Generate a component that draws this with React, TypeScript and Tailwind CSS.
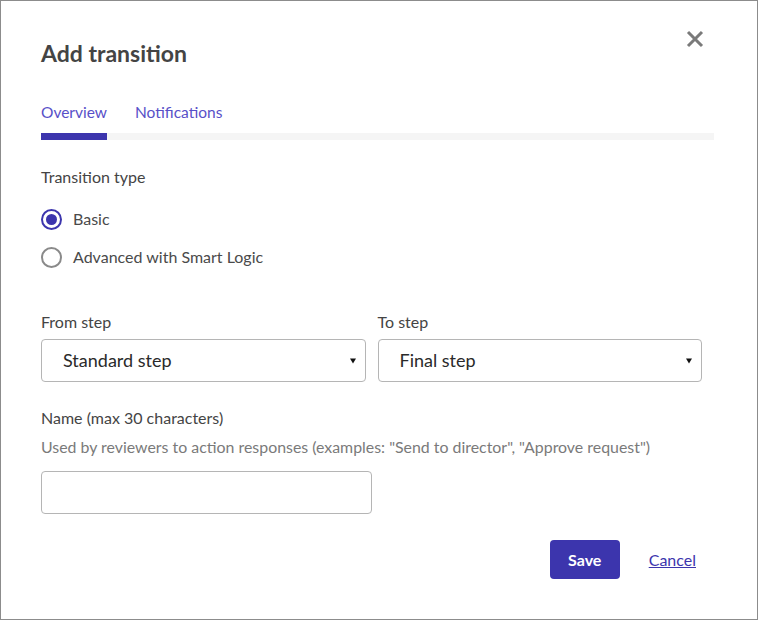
import React from 'react';

const font = { fontFamily: 'Lato, "Open Sans", sans-serif' };

function Radio({ checked, label }: { checked?: boolean; label: string }) {
  return (
    <label className="flex items-center gap-[11px] h-[20px]">
      {checked ? (
        <span className="w-[21px] h-[21px] rounded-full border-2 border-[#3c35ad] flex items-center justify-center">
          <span className="w-[11px] h-[11px] rounded-full bg-[#3c35ad]" />
        </span>
      ) : (
        <span className="w-[21px] h-[21px] rounded-full border-2 border-[#8a8a8a]" />
      )}
      <span className="text-[16px] text-[#4a4a4a]">{label}</span>
    </label>
  );
}

function Select({ value }: { value: string }) {
  return (
    <div className="h-[43px] border border-[#b5b5b5] rounded-[4px] flex items-center justify-between pl-[21px] pr-[9px]">
      <span className="text-[18px] text-[#2a2a2a]">{value}</span>
      <svg width="6" height="6" viewBox="0 0 6 6">
        <path d="M0 0.5 H6 L3 5.5 Z" fill="#111" />
      </svg>
    </div>
  );
}

export default function App() {
  return (
    <div className="w-[758px] h-[620px] bg-white border border-[#8c8c8c] relative" style={font}>
      <button className="absolute left-[684px] top-[28px] w-[20px] h-[20px] flex items-center justify-center">
        <svg width="18" height="18" viewBox="0 0 18 18">
          <path d="M2 2 L16 16 M16 2 L2 16" stroke="#7a7a7a" strokeWidth="3" />
        </svg>
      </button>
      <div className="pl-[40px] pr-[43px] pt-[38px]">
        <h1 className="text-[23px] font-bold text-[#444] leading-[28px]">Add transition</h1>

        <div className="mt-[35px]">
          <div className="flex gap-[28px] text-[15.5px] text-[#5850c8] leading-[20px]">
            <span className="w-[66px]">Overview</span>
            <span>Notifications</span>
          </div>
          <div className="mt-[11px] h-[7px] bg-[#f5f5f5] flex">
            <div className="w-[66px] bg-[#3c35ad]" />
          </div>
        </div>

        <div className="mt-[27px] text-[16px] text-[#444] leading-[20px]">Transition type</div>
        <div className="mt-[22px] flex flex-col gap-[18px]">
          <Radio checked label="Basic" />
          <Radio label="Advanced with Smart  Logic" />
        </div>

        <div className="mt-[45px] flex gap-[12px] pr-[12px]">
          <div className="flex-1">
            <div className="text-[16px] text-[#444] leading-[20px] mb-[7px]">From step</div>
            <Select value="Standard step" />
          </div>
          <div className="flex-1">
            <div className="text-[16px] text-[#444] leading-[20px] mb-[7px]">To step</div>
            <Select value="Final step" />
          </div>
        </div>

        <div className="mt-[26px] text-[16px] text-[#444] leading-[20px]">Name (max 30 characters)</div>
        <div className="mt-[9px] text-[15.9px] text-[#7a7a7a] leading-[20px]">
          Used by reviewers to action responses (examples: "Send to director", "Approve request")
        </div>
        <input className="mt-[14px] w-[331px] h-[43px] border border-[#b5b5b5] rounded-[4px] outline-none px-3" />

        <div className="mt-[26px] flex justify-end items-center gap-[29px] pr-[18px]">
          <button className="w-[70px] h-[39px] bg-[#3c35ad] rounded-[4px] text-white text-[16px] font-bold">Save</button>
          <a className="text-[16px] text-[#3c35ad] underline">Cancel</a>
        </div>
      </div>
    </div>
  );
}
